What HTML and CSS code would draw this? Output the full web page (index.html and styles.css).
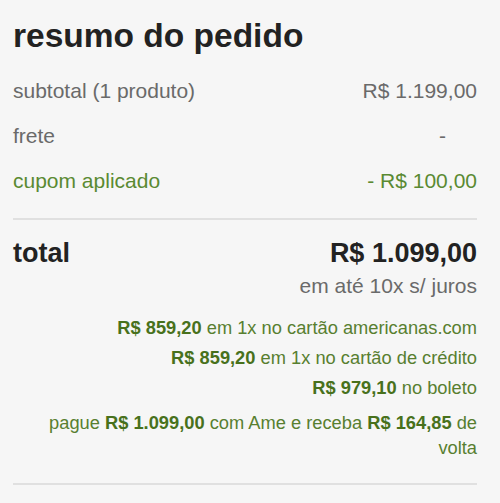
FILE: index.html
```html
<!DOCTYPE html>
<html lang="pt-BR">
<head>
<meta charset="UTF-8">
<meta name="viewport" content="width=device-width, initial-scale=1.0">
<title>resumo do pedido</title>
<link rel="stylesheet" href="styles.css">
</head>
<body>
<div class="summary">
    <h1 class="summary-title">resumo do pedido</h1>

    <div class="summary-rows">
        <div class="summary-row">
            <span>subtotal (1 produto)</span>
            <span>R$ 1.199,00</span>
        </div>
        <div class="summary-row">
            <span>frete</span>
            <span class="shipping-value">-</span>
        </div>
        <div class="summary-row discount">
            <span>cupom aplicado</span>
            <span>- R$ 100,00</span>
        </div>
    </div>

    <div class="total-box">
        <div class="total-row">
            <span class="total-label">total</span>
            <div class="total-values">
                <div class="total-price">R$ 1.099,00</div>
                <div class="total-installments">em até 10x s/ juros</div>
            </div>
        </div>

        <div class="payment-options">
            <p><strong>R$ 859,20</strong> em 1x no cartão americanas.com</p>
            <p><strong>R$ 859,20</strong> em 1x no cartão de crédito</p>
            <p><strong>R$ 979,10</strong> no boleto</p>
            <p class="ame">pague <strong>R$ 1.099,00</strong> com Ame e receba <strong>R$ 164,85</strong> de<br>volta</p>
        </div>
    </div>
</div>
</body>
</html>
```

FILE: styles.css
```css
body {
    margin: 0;
    background-color: #f6f6f6;
    font-family: "Liberation Sans", Arial, sans-serif;
}

.summary {
    padding: 16px 23px 0 13px;
}

.summary-title {
    margin: 0;
    font-size: 33.5px;
    line-height: 40px;
    font-weight: bold;
    color: #222;
}

/* subtotal, frete, cupom */
.summary-rows {
    margin-top: 12px;
    padding-bottom: 15px;
    border-bottom: 2px solid #e0e0e0;
}

.summary-row {
    display: flex;
    justify-content: space-between;
    font-size: 21px;
    line-height: 45px;
    color: #6a6a6a;
}

.shipping-value {
    padding-right: 31px;
}

.summary-row.discount {
    color: #5a8a32;
}

.total-box {
    padding-top: 17px;
    padding-bottom: 23px;
    border-bottom: 2px solid #e0e0e0;
}

.total-row {
    display: flex;
    justify-content: space-between;
    align-items: flex-start;
}

.total-label {
    font-size: 27px;
    line-height: 32px;
    font-weight: bold;
    color: #222;
}

.total-values {
    text-align: right;
}

.total-price {
    font-size: 27px;
    line-height: 32px;
    font-weight: bold;
    color: #222;
}

.total-installments {
    margin-top: 5px;
    font-size: 21px;
    line-height: 24px;
    color: #6a6a6a;
}

.payment-options {
    margin-top: 17px;
    padding-left: 30px;
    text-align: right;
}

.payment-options p {
    margin: 0 0 5px;
    font-size: 18.3px;
    line-height: 25px;
    color: #587f30;
}

.payment-options strong {
    color: #48711c;
}

.payment-options .ame {
    margin: 10px 0 0;
}
```
